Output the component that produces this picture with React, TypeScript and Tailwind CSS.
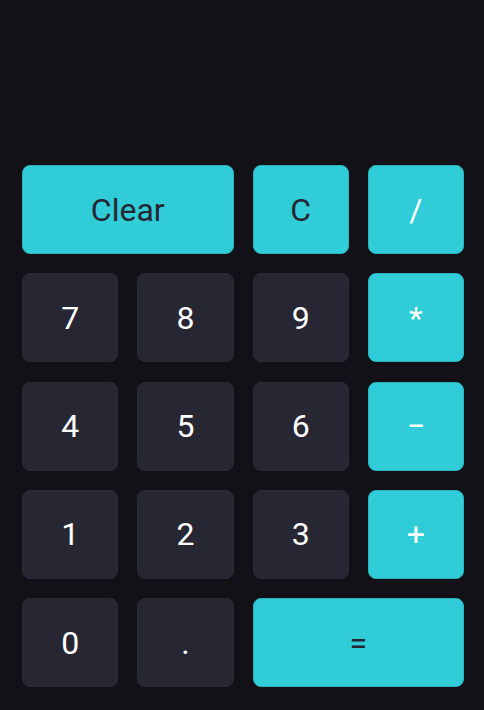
type Key = {
  label: string;
  kind: "num" | "accent" | "op";
  span?: boolean;
};

const keys: Key[] = [
  { label: "Clear", kind: "accent", span: true },
  { label: "C", kind: "accent" },
  { label: "/", kind: "op" },
  { label: "7", kind: "num" },
  { label: "8", kind: "num" },
  { label: "9", kind: "num" },
  { label: "*", kind: "op" },
  { label: "4", kind: "num" },
  { label: "5", kind: "num" },
  { label: "6", kind: "num" },
  { label: "\u2212", kind: "op" },
  { label: "1", kind: "num" },
  { label: "2", kind: "num" },
  { label: "3", kind: "num" },
  { label: "+", kind: "op" },
  { label: "0", kind: "num" },
  { label: ".", kind: "num" },
  { label: "=", kind: "accent", span: true },
];

function CalcKey({ k }: { k: Key }) {
  const base =
    "flex items-center justify-center rounded-lg border text-[32px] font-normal leading-none";
  const tone =
    k.kind === "num"
      ? "bg-[#272733] border-[#2b2b37] text-white"
      : k.kind === "accent"
        ? "bg-[#30cdd9] border-[#2bb3bf] text-[#262633]"
        : "bg-[#30cdd9] border-[#2bb3bf] text-white";
  return (
    <button className={`${base} ${tone} ${k.span ? "col-span-2" : ""}`}>
      {k.label}
    </button>
  );
}

export default function App() {
  return (
    <div
      className="w-[484px] h-[710px] bg-[#121117] flex flex-col"
      style={{ fontFamily: "Roboto, 'Noto Sans', sans-serif" }}
    >
      <div className="h-[165px] shrink-0"></div>
      <div className="grid grid-cols-4 auto-rows-[89px] gap-x-[19px] gap-y-[19.25px] pl-[22px] pr-[20px]">
        {keys.map((k) => (
          <CalcKey key={k.label} k={k} />
        ))}
      </div>
    </div>
  );
}
